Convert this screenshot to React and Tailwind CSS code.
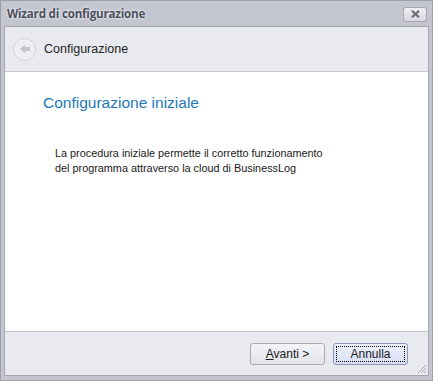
export default function App() {
  const font = { fontFamily: '"Liberation Sans", Arial, sans-serif' };
  return (
    <div className="w-[433px] h-[381px] bg-[#c4c6cf] border border-[#9da0aa] flex flex-col" style={font}>
      <div className="h-[25px] flex items-center justify-between pl-[6px] pr-[5px]">
        <span className="text-[11.6px] font-bold text-[#4c5060] tracking-[-0.2px]" style={{ textShadow: '0 0 3px #ffffff', fontFamily: '"Open Sans", sans-serif' }}>
          Wizard di configurazione
        </span>
        <div className="w-[24px] h-[15px] mt-[1px] rounded-[3px] border border-[#a3a6b0] bg-gradient-to-b from-[#eef0f4] to-[#d6d8df] flex items-center justify-center">
          <svg width="11" height="8" viewBox="0 0 11 8">
            <path d="M2 0.8 L9 7.2 M9 0.8 L2 7.2" stroke="#6a6d78" strokeWidth="2.2" />
          </svg>
        </div>
      </div>
      <div className="flex-1 mx-[3px] mb-[4px] border border-[#a5a8b2] flex flex-col">
        <div className="h-[45px] bg-[#e9eaef] border-b border-[#c6c8cf] flex items-center pl-[8px] gap-[8px]">
          <div className="w-[23px] h-[23px] rounded-full border border-[#d3d4d9] bg-[#eceef1] flex items-center justify-center">
            <svg width="12" height="12" viewBox="0 0 12 12">
              <path d="M1 6 L6 1.5 L6 4 L11 4 L11 8 L6 8 L6 10.5 Z" fill="#c4c6cb" />
            </svg>
          </div>
          <span className="text-[12.5px] text-[#1e1e1e]">Configurazione</span>
        </div>
        <div className="flex-1 bg-white pl-[38px] pt-[20px]">
          <div className="text-[15.5px] text-[#1f78b8] leading-[22px]">Configurazione iniziale</div>
          <div className="pl-[12px] pt-[32px] text-[10.85px] leading-[15px] text-[#1a1a1a]">
            <div>La procedura iniziale permette il corretto funzionamento</div>
            <div>del programma attraverso la cloud di BusinessLog</div>
          </div>
        </div>
        <div className="h-[44px] bg-[#e9eaef] border-t border-[#c3c5cc] flex items-center justify-end pr-[20px] gap-[8px] relative">
          <button className="w-[75px] h-[22px] rounded-[3px] border border-[#a9abb4] bg-gradient-to-b from-[#f3f4f7] to-[#e2e4e9] text-[12px] text-[#1a1a1a]">
            <span className="underline">A</span>vanti &gt;
          </button>
          <button className="w-[75px] h-[22px] rounded-[3px] border border-[#8e97b0] bg-gradient-to-b from-[#eef1fb] to-[#d8def3] p-[2px] text-[12px] text-[#1a1a1a]">
            <div className="w-full h-full border border-dotted border-black flex items-center justify-center">Annulla</div>
          </button>
          <svg className="absolute right-[1px] bottom-[1px]" width="12" height="12" viewBox="0 0 12 12">
            <path d="M11 3 L3 11 M11 6 L6 11 M11 9 L9 11" stroke="#a2a5ae" strokeWidth="1" />
          </svg>
        </div>
      </div>
    </div>
  );
}
